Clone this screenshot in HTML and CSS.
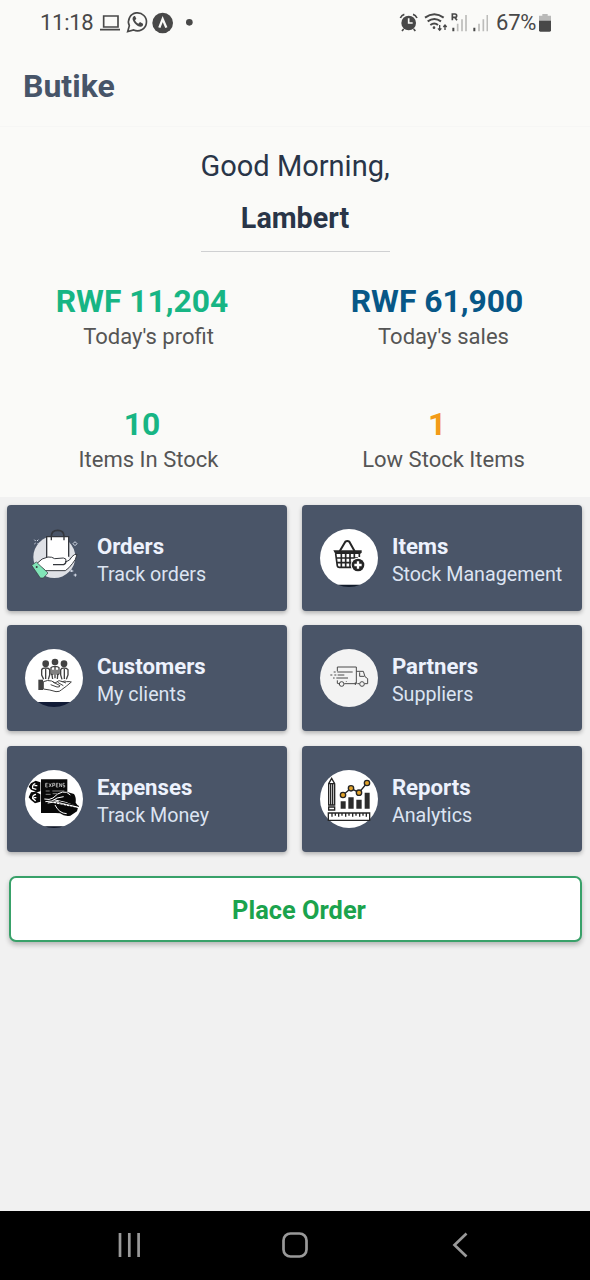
FILE: index.html
```html
<!DOCTYPE html>
<html lang="en">
<head>
<meta charset="utf-8">
<title>Butike</title>
<link rel="stylesheet" href="styles.css">
</head>
<body>
<div class="screen">
  <div class="status">
    <span class="clock">11:18</span>
    <svg class="status-left" viewBox="0 0 315 90" fill="none" stroke="#484848" stroke-width="4">
      <path d="M11 48h43v33H11zM0 89h60" stroke-width="5"/>
      <path d="M83 95l5-18a27 27 0 1 1 13 13z" stroke-width="5"/>
      <path d="M98 54c-3 7 12 27 25 26 6-2 7-6 6-9l-9-5-5 5c-5-2-8-6-10-10l4-5-4-8c-3 0-6 2-7 6z" fill="#484848" stroke="none"/>
      <circle cx="188" cy="69" r="31" fill="#484848" stroke="none"/>
      <path d="M178 83l10-26 11 26" stroke="#fafaf8" stroke-width="7"/>
      <circle cx="268" cy="67" r="10" fill="#484848" stroke="none"/>
    </svg>
    <svg class="status-right" viewBox="24 0 270 135" fill="none" stroke="#484848">
      <circle cx="56" cy="69" r="22" fill="#484848" stroke="none"/>
      <path d="M56 55v14h12" stroke="#fafaf8" stroke-width="5"/>
      <path d="M31 54q4-9 12-11M69 43q8 2 12 11M41 87l-5 6M71 87l5 6" stroke-width="5"/>
      <path d="M105 53q28-20 56 0M113 64q20-14 40 0M121 75q12-9 23 0" stroke-width="6"/>
      <circle cx="132" cy="83" r="4" fill="#484848" stroke="none"/>
      <path d="M149 75v15m-5-5l5 6 5-6M165 90V76m-5 5l5-6 5 6" stroke-width="4"/>
      <path d="M187 61V42h8q5 0 5 5t-5 5h-8m7 0l7 9" stroke-width="5"/>
      <path d="M190 94V83M253 94V83" stroke-width="6"/>
      <path d="M203 94V71M216 94V58M228 94V45M267 94V71M280 94V58M292 94V45" stroke="#bcbcba" stroke-width="5"/>
    </svg>
    <span class="percent">67%</span>
    <svg class="battery" viewBox="0 0 36 54"><path d="M10 0h16v5h10v17H0V5h10z" fill="#b9b9b8"/><path d="M0 20h36v29q0 4-4 4H4q-4 0-4-4z" fill="#484848"/></svg>
  </div>
  <header class="header"><h1 class="brand">Butike</h1></header>
  <section class="summary">
    <div class="greeting">
      <div class="hello">Good Morning,</div>
      <div class="name">Lambert</div>
    </div>
    <div class="stats">
      <div class="stat"><div class="value green">RWF 11,204</div><div class="label">Today's profit</div></div>
      <div class="stat"><div class="value blue">RWF 61,900</div><div class="label">Today's sales</div></div>
      <div class="stat"><div class="value green">10</div><div class="label">Items In Stock</div></div>
      <div class="stat"><div class="value orange">1</div><div class="label">Low Stock Items</div></div>
    </div>
  </section>
  <main class="cards">
    <div class="card">
      <svg class="icon" viewBox="30 42 174 174">
        <circle cx="118" cy="126" r="63" fill="#dfe1e6"/>
        <path d="M109 76V64q0-18 19-18t19 18v12" fill="none" stroke="#34373d" stroke-width="5"/>
        <path d="M95 65h66v75H95z" fill="#fff"/>
        <path d="M95 128V65h14v11M147 76V65h14v60M109 65h38" fill="none" stroke="#34373d" stroke-width="4"/>
        <path d="M65 146q16-18 34-20 12-1 20 5l26-2q10 1 8 9l-2 3q14-3 20-16 6-8 15-7-3 17-14 28-10 14-21 21H92z" fill="#fff" stroke="#34373d" stroke-width="3"/>
        <path d="M114 149h32q6-3 7-8" fill="none" stroke="#34373d" stroke-width="4"/>
        <path d="M50 151l14-10 35 33-14 15h-9z" fill="#80e4b7" stroke="#34373d" stroke-width="2"/>
        <circle cx="65" cy="156" r="3" fill="#34373d"/>
        <path d="M58 74l4 4m8-4l-4 4m-8 9l4-3m10 5l-4-5M180 80l6 6-6 6-6-6zM170 164v7m-5-3h10m6 8v9m-5-5h9" fill="none" stroke="#d7dde9" stroke-width="3"/>
      </svg>
      <div class="card-text"><div class="title">Orders</div><div class="subtitle">Track orders</div></div>
    </div>
    <div class="card">
      <svg class="icon" viewBox="30 42 174 174">
        <clipPath id="disc-items"><circle cx="117" cy="129" r="87"/></clipPath>
        <g clip-path="url(#disc-items)"><path d="M30 42h174v168H30z" fill="#fff"/><path d="M30 209h174v7H30z" fill="#111b2a"/></g>
        <g fill="none" stroke="#252525" stroke-width="5">
          <path d="M89 109l17-29q6-4 12 0l16 29" stroke-width="6"/>
          <path d="M70 106h85v7l-5 4H76z" fill="#252525" stroke="none"/>
          <path d="M77 116l5 37q1 4 6 4h39M80 129h64M82 143h44M94 116v40M107 116v40M120 116v40M133 116v13M148 116v10"/>
        </g>
        <circle cx="144" cy="150" r="22" fill="#fff"/><circle cx="144" cy="150" r="19" fill="#252525"/>
        <path d="M144 139v22M133 150h22" stroke="#fff" stroke-width="7"/>
      </svg>
      <div class="card-text"><div class="title">Items</div><div class="subtitle">Stock Management</div></div>
    </div>
    <div class="card">
      <svg class="icon" viewBox="30 43 174 174">
        <clipPath id="disc-customers"><circle cx="117" cy="130" r="87"/></clipPath>
        <g clip-path="url(#disc-customers)"><path d="M30 43h174v160H30z" fill="#fff"/><path d="M30 202h174v15H30z" fill="#111b36"/></g>
        <g fill="#424242"><circle cx="92" cy="87" r="10"/><circle cx="120" cy="82" r="10"/><circle cx="147" cy="87" r="10"/></g>
        <g fill="#fff" stroke="#424242" stroke-width="4">
          <path d="M86 134l-6-13v-16q2-5 12-5t12 5v16l-4 13M141 134l-4-13v-16q2-5 10-5t12 5v16l-5 13"/>
          <path d="M113 133l-2-12-3-4v-18q3-4 12-4t12 4v18l-4 4-1 12M120 97v34M92 103v30M148 103v30M114 105v15M126 105v15"/>
          <path d="M85 141q13-6 25-2l10 6 12-7 10 3 8-2 5 2q7-1 14 1-16 14-29 23-6 7-17 6-18-6-38-8z" stroke-width="3"/>
          <path d="M107 150l19 7q9 1 9-4l-21-11m14 1l17 10m-5-13l13 5" fill="none" stroke-width="3"/>
        </g>
        <path d="M70 135h14v31H70z" fill="#424242"/>
      </svg>
      <div class="card-text"><div class="title">Customers</div><div class="subtitle">My clients</div></div>
    </div>
    <div class="card">
      <svg class="icon" viewBox="30 43 174 174">
        <circle cx="117" cy="130" r="87" fill="#f3f3f3"/>
        <g fill="none" stroke="#4a4a4a" stroke-width="3">
          <path d="M82 110V97h57v50H103M82 137v9l7 2M139 110h21l5 16 8 6v15h-9M149 113v12h14M82 112h46M71 112h6M61 121h6m6 0h6m4 0h20M69 130h5m5 0h35M109 139v2M136 143v8M142 147h6"/>
          <circle cx="95" cy="148" r="7"/><circle cx="156" cy="148" r="7"/>
        </g>
      </svg>
      <div class="card-text"><div class="title">Partners</div><div class="subtitle">Suppliers</div></div>
    </div>
    <div class="card">
      <svg class="icon" viewBox="30 43 174 174">
        <clipPath id="disc-expenses"><circle cx="117" cy="130" r="87"/></clipPath>
        <g clip-path="url(#disc-expenses)"><path d="M30 43h174v170H30z" fill="#fff"/><path d="M30 212h174v5H30z" fill="#101827"/></g>
        <path d="M48 83l14-8 14 5v27l-10 3-18-8-7-9zM48 110l14-2 14 8v22l-16 5-12-10-7-8z" fill="#080808"/>
        <path d="M61 84q-10 3-8 14l11 3M58 90h9M63 116q-11 2-10 12l9 8M56 126h8" stroke="#fff" stroke-width="4" fill="none"/>
        <path d="M78 71h79v38l20 6q7 10 5 26l8 11-4 15-20 13q-18 3-31-7l-13-1H78z" fill="#080808"/>
        <path d="M92 83v11m0-11h6m-6 5h5m-5 6h6M102 83l7 11m0-11l-7 11M113 94V83h6v6h-6M124 83v11h6m-6-11h6m-6 5h5M134 94V83l6 11V83M149 83h-5v6h5v5h-5" stroke="#e8e8e8" stroke-width="2" fill="none"/>
        <path d="M92 106h12m8 0h36M92 116h15m6-2h13" stroke="#bbb" stroke-width="2"/>
        <path d="M88 130q15 4 26-3l14-12q15-9 27-5l11 8M91 138l20-2 15-9 20-4M98 142l28-4 68 18M116 132l35 8 43 16M120 148q12 25 35 26" stroke="#fff" stroke-width="3" fill="none"/>
        <path d="M116 140l78 16" stroke="#fff" stroke-width="4" stroke-dasharray="8 2"/>
        <path d="M132 138l60 14" stroke="#080808" stroke-width="3"/>
      </svg>
      <div class="card-text"><div class="title">Expenses</div><div class="subtitle">Track Money</div></div>
    </div>
    <div class="card">
      <svg class="icon" viewBox="30 43 174 174">
        <circle cx="117" cy="130" r="87" fill="#fff"/>
        <g fill="none" stroke="#252525" stroke-width="4">
          <path d="M56 84l9-16 9 16v64H56zM56 84h18M62 84v64M68 84v64M56 154h18v9H56z"/>
          <path d="M55 172h124v22H55zM66 173v10M76 173v7M86 173v10M96 173v7M107 173v10M117 173v7M128 173v10M138 173v7M149 173v10M159 173v7M169 173v10"/>
          <path d="M99 118l24-20 24 13 24-29"/>
          <g fill="#e0a22b"><circle cx="99" cy="118" r="8"/><circle cx="123" cy="98" r="8"/><circle cx="147" cy="111" r="8"/><circle cx="171" cy="82" r="8"/></g>
        </g>
        <path d="M92 137h15v22H92zM115 125h16v34h-16zM139 132h16v27h-16zM164 111h15v48h-15z" fill="#2b2b2b"/>
      </svg>
      <div class="card-text"><div class="title">Reports</div><div class="subtitle">Analytics</div></div>
    </div>
  </main>
  <button class="order">Place Order</button>
  <nav class="nav">
    <svg viewBox="0 0 26 26"><path d="M4 1v24M13.300 1v24M22.600 1v24"/></svg>
    <svg viewBox="0 0 26 26"><rect x="1.5" y="1.5" width="23" height="23" rx="7"/></svg>
    <svg viewBox="0 0 26 26"><path d="M18.500 1.500L6.500 13l12 11.500"/></svg>
  </nav>
</div>
</body>
</html>
```
FILE: styles.css
```css
* { box-sizing: border-box; }
body { margin: 0; font-family: Roboto, "Liberation Sans", sans-serif; background: #f1f1f1; }
.screen { width: 590px; height: 1280px; display: flex; flex-direction: column; }
.status { height: 46px; flex: none; display: flex; align-items: flex-start; background: #fafaf8; color: #484848; font-size: 22px; line-height: 46px; padding-left: 40px; }
.clock { width: 60px; letter-spacing: -0.3px; }
.status-left { width: 105px; height: 30px; overflow: visible; }
.status-right { width: 90px; height: 45px; margin-left: 193px; }
.percent { width: 42px; margin-left: 8px; white-space: nowrap; letter-spacing: -0.2px; }
.battery { width: 12px; height: 18px; margin: 14px 0 0 1px; }
.header { height: 81px; flex: none; background: #fafaf8; border-bottom: 1px solid #f6f6f5; padding: 20px 23px 0; }
.brand { margin: 0; font-size: 32px; line-height: 40px; font-weight: 700; color: #475569; }
.summary { height: 370px; flex: none; background: #fafaf8; display: flex; flex-direction: column; align-items: center; }
.greeting { width: 189px; height: 125px; flex: none; border-bottom: 1px solid #cfd0d2; text-align: center; color: #293548; white-space: nowrap; }
.hello { font-size: 29px; line-height: 40px; margin-top: 19px; }
.name { font-size: 28.7px; line-height: 40px; margin-top: 12px; font-weight: 700; }
.stats { width: 590px; padding: 29px 7px 0 0; display: grid; grid-template-columns: 284px 306px; grid-template-rows: 123px 93px; }
.stat { text-align: center; }
.value { font-size: 31.8px; line-height: 40px; font-weight: 700; }
.label { font-size: 22px; line-height: 32px; color: #555; padding-left: 13px; }
.green { color: #17b584; }
.blue { color: #075787; }
.orange { color: #f39b18; }
.cards { padding: 7.5px 7.5px 0 7.4px; display: grid; grid-template-columns: 280px 280px; grid-auto-rows: 106px; gap: 14.6px 15px; }
.card { display: flex; background: #4a5568; border-radius: 4px; padding: 24px 18px; box-shadow: 0 2px 4px rgba(0,0,0,.28); }
.icon { width: 58px; height: 58px; flex: none; }
.card-text { margin-left: 13.5px; white-space: nowrap; color: #edf2fd; }
.title { font-size: 22.2px; line-height: 30px; margin-top: 2px; font-weight: 700; }
.subtitle { font-size: 19.7px; line-height: 28px; color: #dce4f2; }
.order { margin: 24.5px 8px 0 9px; height: 66px; flex: none; border: 2px solid #38a169; border-radius: 7px; background: #fff; padding: 2px 0 0 7px; font: 700 25.4px/30px Roboto, "Liberation Sans", sans-serif; color: #1ba34d; box-shadow: 0 3px 5px rgba(0,0,0,.24); }
.nav { height: 69px; margin-top: auto; padding-bottom: 2px; background: #000; display: flex; justify-content: center; align-items: center; gap: 140px; }
.nav svg { width: 26px; height: 26px; fill: none; stroke: #999; stroke-width: 2.7; }
```
